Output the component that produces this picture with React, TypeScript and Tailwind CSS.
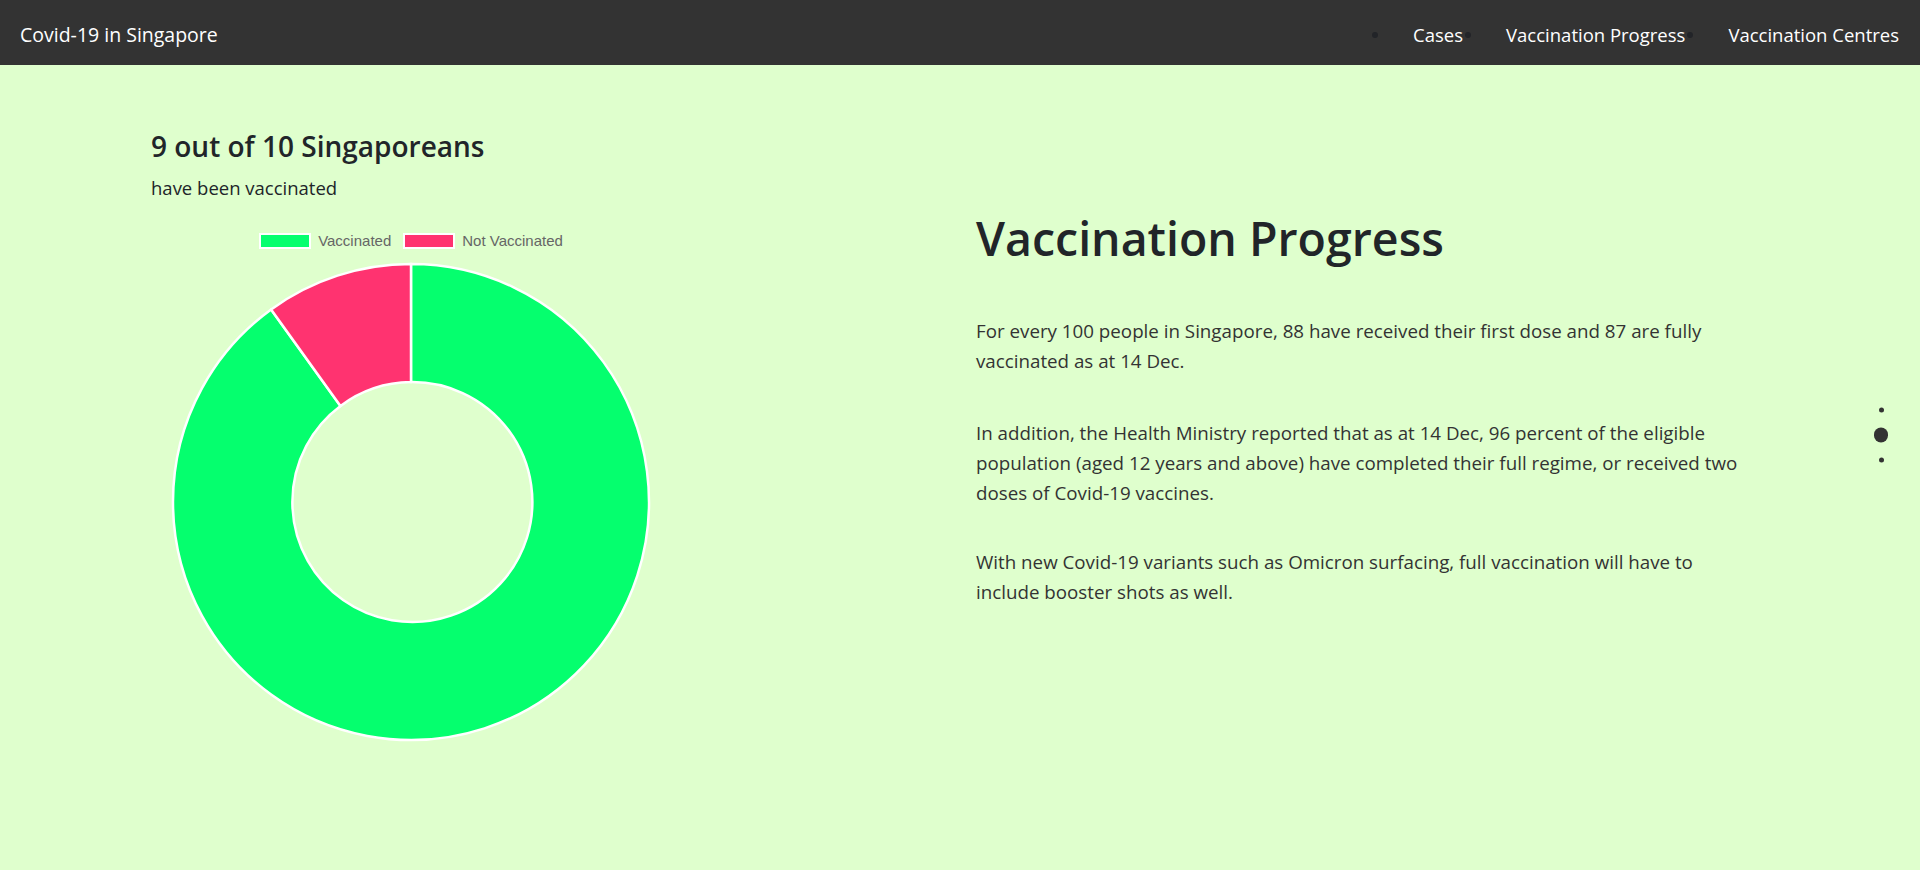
import { Fragment } from 'react';

const links = ['Cases', 'Vaccination Progress', 'Vaccination Centres'];

const paragraphs = [
  ['For every 100 people in Singapore, 88 have received their first dose and 87 are fully', 'vaccinated as at 14 Dec.'],
  [
    'In addition, the Health Ministry reported that as at 14 Dec, 96 percent of the eligible',
    'population (aged 12 years and above) have completed their full regime, or received two',
    'doses of Covid-19 vaccines.',
  ],
  ['With new Covid-19 variants such as Omicron surfacing, full vaccination will have to', 'include booster shots as well.'],
];

const Doughnut = () => (
  <svg width={520} height={484} viewBox="0 0 520 484" className="block">
    {/* 90% vaccinated */}
    <path
      d="M 260 3 A 238 238 0 1 1 120.1 48.45 L 189.47 144.92 A 120 120 0 1 0 260 121 Z"
      fill="#05ff6e"
      stroke="#ffffff"
      strokeWidth={2.5}
    />
    {/* 10% not vaccinated */}
    <path
      d="M 120.1 48.45 A 238 238 0 0 1 260 3 L 260 121 A 120 120 0 0 0 189.47 144.92 Z"
      fill="#ff3370"
      stroke="#ffffff"
      strokeWidth={2.5}
    />
  </svg>
);

export default function App() {
  return (
    <div className="min-h-screen bg-[#dfffcd] font-['Open_Sans',sans-serif] relative">
      {/* Navbar */}
      <nav className="h-[65px] pt-1 bg-[#333333] flex items-center justify-between pl-5 pr-[21px]">
        <span className="text-[19.5px] text-white">Covid-19 in Singapore</span>
        <ul className="flex items-center">
          {links.map(l => (
            <li key={l} className="flex items-center">
              <span className="w-[6px] h-[6px] rounded-full bg-[#222428] ml-[2px]" />
              <a className="ml-[35px] text-[18.5px] text-white">{l}</a>
            </li>
          ))}
        </ul>
      </nav>

      <main className="flex">
        {/* Chart column */}
        <section className="w-1/2 pl-[151px] pt-[64px]">
          <h3 className="text-[28px] font-semibold text-[#212529] leading-[34px]">9 out of 10 Singaporeans</h3>
          <p className="mt-[10px] text-[18.5px] leading-[30px] text-[#212529]">have been vaccinated</p>
          <div className="w-[520px] mt-[30px]">
            <div className="flex items-center justify-center gap-3 h-4 font-['Liberation_Sans',Arial,sans-serif] text-[15px] text-[#666666]">
              <div className="flex items-center gap-[7px]">
                <span className="w-[52px] h-4 bg-[#05ff6e] border-[2.5px] border-white" />
                <span>Vaccinated</span>
              </div>
              <div className="flex items-center gap-[7px]">
                <span className="w-[52px] h-4 bg-[#ff3370] border-[2.5px] border-white" />
                <span>Not Vaccinated</span>
              </div>
            </div>
            <div className="mt-[12px] flex justify-center">
              <Doughnut />
            </div>
          </div>
        </section>

        {/* Text column */}
        <section className="w-1/2 pl-4 pt-[144px] text-[#333333]">
          <h1 className="text-[46.5px] font-semibold leading-[58px] text-[#212529] whitespace-nowrap">Vaccination Progress</h1>
          <div className="mt-[49px] text-[18.75px] leading-[30px]">
            {paragraphs.map((lines, i) => (
              <p key={i} className={`whitespace-nowrap ${i === 0 ? 'mb-[42px]' : 'mb-[39px]'}`}>
                {lines.map((line, j) => (
                  <Fragment key={j}>
                    {j > 0 && <br />}
                    {line}
                  </Fragment>
                ))}
              </p>
            ))}
          </div>
        </section>
      </main>

      {/* Section dots */}
      <ul className="absolute right-[32px] top-1/2 -translate-y-1/2 flex flex-col">
        <li className="w-[14px] h-[25px] flex items-center justify-center">
          <span className="w-[5px] h-[5px] rounded-full bg-[#333333]" />
        </li>
        <li className="w-[14px] h-[25px] flex items-center justify-center">
          <span className="w-[15px] h-[15px] rounded-full bg-[#333333]" />
        </li>
        <li className="w-[14px] h-[25px] flex items-center justify-center">
          <span className="w-[5px] h-[5px] rounded-full bg-[#333333]" />
        </li>
      </ul>
    </div>
  );
}
